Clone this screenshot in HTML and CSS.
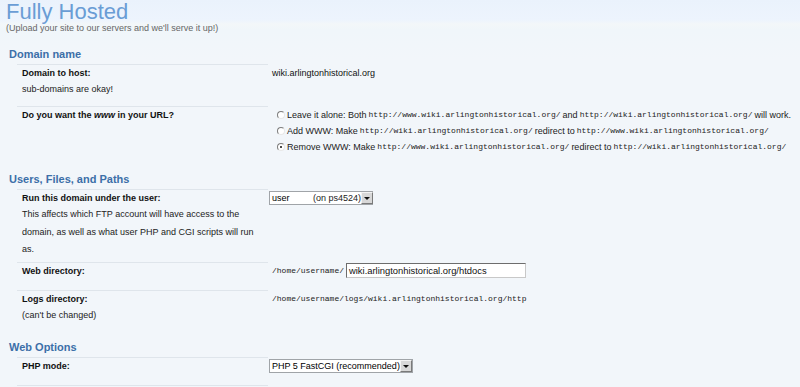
FILE: index.html
```html
<html>

<head>
  <link rel="stylesheet" href="styles.css">
</head>

<body>
  <div class="page">
    <h1 class="page-title">Fully Hosted</h1>
    <div class="page-subtitle">(Upload your site to our servers and we'll serve it up!)</div>

    <div class="section section-first">
      <h2 class="section-title">Domain name</h2>

      <div class="row">
        <div class="row-label">
          <div class="row-label-title">Domain to host:</div>
          <div class="row-label-desc">sub-domains are okay!</div>
        </div>
        <div class="row-value">wiki.arlingtonhistorical.org</div>
      </div>

      <div class="row">
        <div class="row-label">
          <div class="row-label-title">Do you want the <em>www</em> in your URL?</div>
        </div>
        <div class="row-value">
          <label class="radio-option"><span class="radio"></span>Leave it alone: Both <code>http://www.wiki.arlingtonhistorical.org/</code> and <code>http://wiki.arlingtonhistorical.org/</code> will work.</label>
          <label class="radio-option"><span class="radio"></span>Add WWW: Make <code>http://wiki.arlingtonhistorical.org/</code> redirect to <code>http://www.wiki.arlingtonhistorical.org/</code></label>
          <label class="radio-option"><span class="radio radio-checked"></span>Remove WWW: Make <code>http://www.wiki.arlingtonhistorical.org/</code> redirect to <code>http://wiki.arlingtonhistorical.org/</code></label>
        </div>
      </div>
    </div>

    <div class="section">
      <h2 class="section-title">Users, Files, and Paths</h2>

      <div class="row row-long">
        <div class="row-label">
          <div class="row-label-title">Run this domain under the user:</div>
          <div class="row-label-desc row-label-desc-long">This affects which FTP account will have access to the domain, as well as what user PHP and CGI scripts will run as.</div>
        </div>
        <div class="row-value row-value-control">
          <div class="select select-user">
            <span class="select-text"><span class="select-main">user</span><span class="select-extra">(on ps4524)</span></span>
            <span class="select-button"></span>
          </div>
        </div>
      </div>

      <div class="row">
        <div class="row-label">
          <div class="row-label-title">Web directory:</div>
        </div>
        <div class="row-value row-value-control">
          <code>/home/username/</code><span class="text-input">wiki.arlingtonhistorical.org/htdocs</span>
        </div>
      </div>

      <div class="row">
        <div class="row-label">
          <div class="row-label-title">Logs directory:</div>
          <div class="row-label-desc">(can't be changed)</div>
        </div>
        <div class="row-value"><code>/home/username/logs/wiki.arlingtonhistorical.org/http</code></div>
      </div>
    </div>

    <div class="section">
      <h2 class="section-title">Web Options</h2>

      <div class="row">
        <div class="row-label">
          <div class="row-label-title">PHP mode:</div>
        </div>
        <div class="row-value row-value-control">
          <div class="select select-php">
            <span class="select-text">PHP 5 FastCGI (recommended)</span>
            <span class="select-button"></span>
          </div>
        </div>
      </div>

      <div class="row">
        <div class="row-label">
          <div class="row-label-title">&nbsp;</div>
        </div>
        <div class="row-value"></div>
      </div>
    </div>
  </div>
</body>

</html>
```

FILE: styles.css
```css
* {
  margin: 0;
  padding: 0;
  box-sizing: border-box;
}

html,
body {
  height: 100%;
}

body {
  font-family: "Liberation Sans", Arial, sans-serif;
  font-size: 9px;
  color: #111;
  overflow: hidden;
  background: linear-gradient(#eaf2fc 0, #edf4fd 20px, #f3f7f9 24px, #f0f6fa 30px, #f2f6fa 60px);
}

code {
  font-family: "Liberation Mono", "Courier New", monospace;
  font-size: 8px;
  color: #222;
}

.page {
  padding: 1px 6px 0;
}

.page-title {
  font-size: 22px;
  font-weight: normal;
  line-height: 22px;
  color: #6a9dd5;
}

.page-subtitle {
  line-height: 10px;
  color: #666;
}

.section {
  margin-top: 7px;
}

.section-first {
  margin-top: 13px;
}

.section-title {
  margin: 0 0 2px 3px;
  font-size: 11px;
  font-weight: bold;
  line-height: 16px;
  color: #3c6fa8;
}

.row {
  display: grid;
  grid-template-columns: 251px 1fr;
  margin-left: 11px;
}

.row-label {
  border-top: 1px solid #dfe5eb;
  padding: 0 5px 9px;
  line-height: 16px;
}

.row-label-title {
  font-weight: bold;
  color: #111;
}

.row-label-desc {
  color: #222;
}

.row-label-desc-long {
  line-height: 17.5px;
}

.row-long .row-label {
  padding-bottom: 3px;
}

.row-value {
  padding: 1px 0 9px 4px;
  line-height: 16px;
  color: #111;
}

.row-value-control {
  height: 28px;
}

/* radios */

.radio-option {
  display: flex;
  align-items: center;
  height: 16px;
  white-space: nowrap;
  color: #222;
}

.radio-option code {
  margin: 0 2px;
}

.radio {
  flex-shrink: 0;
  position: relative;
  width: 8px;
  height: 8px;
  margin: 0 2px 0 5px;
  border-radius: 50%;
  border: 1px solid;
  border-color: #7d7d7d #e8e8e8 #e8e8e8 #7d7d7d;
  background: #fff;
}

.radio-checked::after {
  content: "";
  position: absolute;
  left: 2px;
  top: 2px;
  width: 2px;
  height: 2px;
  border-radius: 50%;
  background: #111;
}

/* selects */

.select {
  display: inline-flex;
  align-items: center;
  height: 14px;
  margin: 1px 0 0 -3px;
  border: 1px solid #a0a4a8;
  background: #fff;
  vertical-align: top;
}

.select-user {
  width: 104px;
}

.select-php {
  width: 144px;
}

.select-text {
  flex-grow: 1;
  display: flex;
  padding-left: 2px;
  line-height: 12px;
  font-size: 9px;
  color: #000;
  white-space: nowrap;
}

.select-main {
  width: 41px;
}

.select-extra {
  color: #222;
}

.select-button {
  position: relative;
  flex-shrink: 0;
  width: 12px;
  height: 12px;
  border: 1px solid;
  border-color: #f4f4f4 #7a7a7a #7a7a7a #f4f4f4;
  background: #d8d8d8;
}

.select-button::after {
  content: "";
  position: absolute;
  left: 2px;
  top: 4px;
  border-left: 3px solid transparent;
  border-right: 3px solid transparent;
  border-top: 3px solid #111;
}

/* text input */

.text-input {
  display: inline-block;
  vertical-align: top;
  width: 180px;
  height: 15px;
  margin-left: 2px;
  padding: 0 2px;
  border: 1px solid;
  border-color: #6d6d6d #c8c8c8 #c8c8c8 #6d6d6d;
  background: #fff;
  font-size: 9.4px;
  line-height: 13px;
  color: #111;
}
```
